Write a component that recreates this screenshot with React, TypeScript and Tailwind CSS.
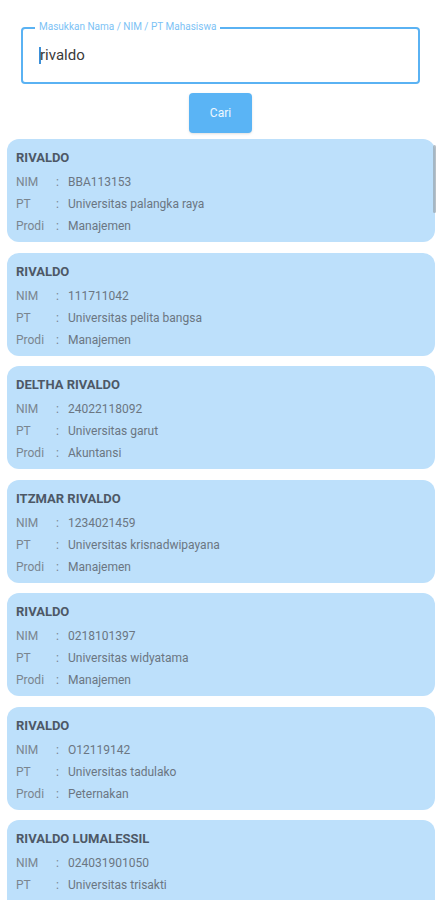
import React from 'react';

interface Mahasiswa {
  nama: string;
  nim: string;
  pt: string;
  prodi: string;
}

const results: Mahasiswa[] = [
  { nama: 'RIVALDO', nim: 'BBA113153', pt: 'Universitas palangka raya', prodi: 'Manajemen' },
  { nama: 'RIVALDO', nim: '111711042', pt: 'Universitas pelita bangsa', prodi: 'Manajemen' },
  { nama: 'DELTHA RIVALDO', nim: '24022118092', pt: 'Universitas garut', prodi: 'Akuntansi' },
  { nama: 'ITZMAR RIVALDO', nim: '1234021459', pt: 'Universitas krisnadwipayana', prodi: 'Manajemen' },
  { nama: 'RIVALDO', nim: '0218101397', pt: 'Universitas widyatama', prodi: 'Manajemen' },
  { nama: 'RIVALDO', nim: 'O12119142', pt: 'Universitas tadulako', prodi: 'Peternakan' },
  { nama: 'RIVALDO LUMALESSIL', nim: '024031901050', pt: 'Universitas trisakti', prodi: 'Manajemen' },
];

const Row = ({ label, value }: { label: string; value: string }) => (
  <div className="flex h-[22px] items-center text-[12px] text-[#7a858f]">
    <span className="w-[40px]">{label}</span>
    <span className="w-[12px]">:</span>
    <span className="text-[#6b7682]">{value}</span>
  </div>
);

const ResultCard = ({ m }: { m: Mahasiswa }) => (
  <div className="rounded-[12px] bg-[#bde0fb] pl-[9px] pr-3 pt-[11px] pb-[5px]">
    <div className="h-[16px] text-[13px] font-bold leading-[16px] text-[#4d5866]">{m.nama}</div>
    <div className="mt-[5px]">
      <Row label="NIM" value={m.nim} />
      <Row label="PT" value={m.pt} />
      <Row label="Prodi" value={m.prodi} />
    </div>
  </div>
);

export default function App() {
  return (
    <div
      className="relative h-[900px] w-[441px] overflow-hidden bg-white"
      style={{ fontFamily: 'Roboto, "Noto Sans", sans-serif' }}
    >
      {/* search field */}
      <div className="px-[21px] pt-[27px]">
        <div className="relative h-[57px] rounded-[4px] border-2 border-[#5ab2f3]">
          <span className="absolute left-[12px] top-[-8px] bg-white px-[4px] text-[10px] leading-[12px] text-[#7cc2f5]">
            Masukkan Nama / NIM / PT Mahasiswa
          </span>
          <div className="flex h-full items-center pl-[16px] text-[15px] text-[#3a3a3a]">
            <span className="mr-[-1px] inline-block h-[17px] w-[2px] bg-[#3b8fd8]" />
            <span>rivaldo</span>
          </div>
        </div>
      </div>

      <div className="mt-[9px] flex justify-center">
        <button className="h-[40px] w-[63px] rounded-[4px] bg-[#5ab4f5] text-[12px] text-white/90 shadow-sm">
          Cari
        </button>
      </div>

      {/* results */}
      <div className="mt-[6px] flex flex-col gap-[10.5px] pl-[7px] pr-[6px]">
        {results.map((m, i) => (
          <ResultCard key={i} m={m} />
        ))}
      </div>

      {/* scrollbar thumb */}
      <div className="absolute left-[433px] top-[145px] h-[68px] w-[3px] rounded-full bg-[#9aa5ae]/70" />
    </div>
  );
}
